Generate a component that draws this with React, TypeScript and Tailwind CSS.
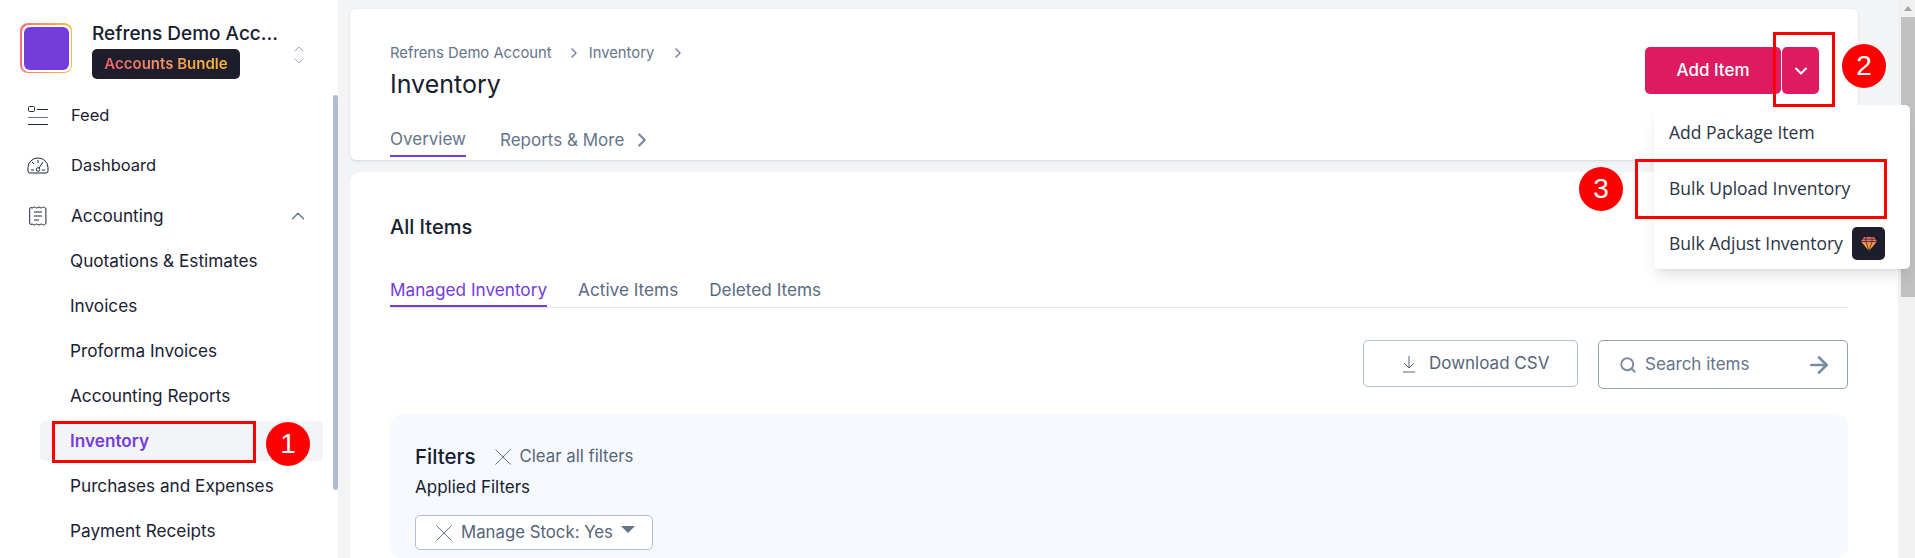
import { ChevronDown, ChevronRight, ChevronUp, Search, ArrowRight } from "lucide-react";

const subItems = [
  "Quotations & Estimates",
  "Invoices",
  "Proforma Invoices",
  "Accounting Reports",
  "Inventory",
  "Purchases and Expenses",
  "Payment Receipts",
];

const FeedIcon = () => (
  <svg width="20" height="19" viewBox="0 0 20 19" fill="none" stroke="#1f2937" strokeWidth="1">
    <rect x="0.5" y="0.5" width="6" height="5" rx="1" />
    <path d="M9 3.5h11M0 18.5h20" />
    <path d="M0 11.5h20" stroke="#64748b" />
  </svg>
);

const DashIcon = () => (
  <svg width="22" height="17" viewBox="0 0 22 17" fill="none" stroke="#1f2937" strokeWidth="1">
    <path d="M3 16h16a2 2 0 0 0 2-2v-3.5a10 9.5 0 0 0-20 0V14a2 2 0 0 0 2 2z" />
    <path d="M11 3v3M5 5l2 2M16 5l-4 6M4 13h3M15 13h3" />
    <circle cx="11" cy="12.5" r="1.8" />
  </svg>
);

const BillIcon = () => (
  <svg width="18" height="20" viewBox="0 0 18 20" fill="none" stroke="#1f2937" strokeWidth="1">
    <path d="M2 1.5q1.1 1 2.2 0t2.2 0 2.4 0 2.4 0 2.2 0 2.2 0q1.3.2 1.3 1.5v14q0 1.3-1.3 1.5-1.1 1-2.2 0t-2.2 0-2.4 0-2.4 0-2.2 0-2.2 0Q.7 18.3.7 17V3q0-1.3 1.3-1.5z" />
    <path d="M5 6h8M5 10h8M5 14h5" />
  </svg>
);

const CrossIcon = () => (
  <svg width="16" height="16" viewBox="0 0 16 16" fill="none" stroke="#64748b" strokeWidth="1" className="shrink-0">
    <path d="M.5.5l15 15M15.5.5l-15 15" />
  </svg>
);

const Marker = ({ n, className }: { n: number; className: string }) => (
  <div className={`absolute flex h-11 w-11 items-center justify-center rounded-full bg-[#ff0000] font-['Liberation_Sans',sans-serif] text-[28px] text-white ${className}`}>
    {n}
  </div>
);

const Sidebar = () => (
  <aside className="relative z-10 h-[558px] w-[338px] shrink-0 overflow-hidden bg-white text-[17.2px] text-[#1a2233]">
    <div className="flex h-[90px] items-start pl-5 pt-[23px]">
      <div className="h-[50px] w-[52px] rounded-[8px] bg-gradient-to-r from-[#ff6b7a] to-[#fbbf24] p-[1.5px]">
        <div className="h-full w-full rounded-[7px] bg-white p-[2px]">
          <div className="h-full w-full rounded-[6px] bg-[#733cdb]" />
        </div>
      </div>
      <div className="ml-5 w-[190px]">
        <div className="whitespace-nowrap text-[19px] leading-[22px] font-medium text-[#17202f]">Refrens Demo Acc...</div>
        <div className="mt-[4px] flex h-[30px] w-[148px] items-center justify-center rounded-[5px] bg-[#1d1d2b]">
          <span className="bg-gradient-to-r from-[#f0616d] to-[#fbbf24] bg-clip-text text-[15px] font-semibold text-transparent">Accounts Bundle</span>
        </div>
      </div>
      <div className="ml-[9px] mt-[18px] flex flex-col text-[#8291a8]">
        <ChevronUp size={16} strokeWidth={1.2} className="-mb-[4px]" />
        <ChevronDown size={16} strokeWidth={1.2} />
      </div>
    </div>
    <div className="flex h-[50px] items-center pl-[28px] text-[16.5px]">
      <FeedIcon />
      <span className="ml-[23px]">Feed</span>
    </div>
    <div className="flex h-[50px] items-center pl-[27px] text-[16.5px]">
      <DashIcon />
      <span className="ml-[22px]">Dashboard</span>
    </div>
    <div className="flex h-[50px] items-center pl-[29px] pr-[29px] pt-[1px]">
      <BillIcon />
      <span className="ml-[24px]">Accounting</span>
      <ChevronUp size={22} strokeWidth={1.5} className="ml-auto text-[#64748b]" />
    </div>
    <div className="-mt-[2px] flex flex-col pl-[40px]">
      {subItems.map((s) => (
        <div key={s} className="flex h-[45px] w-[283px] items-center">
          <div className={`flex h-[40px] w-full items-center pl-[30px] ${s === "Inventory" ? "rounded-[5px] bg-[#f3f4f6] font-semibold text-[#733cdb]" : ""}`}>{s}</div>
        </div>
      ))}
    </div>
    <div className="absolute left-[333px] top-[95px] h-[395px] w-[5px] rounded-full bg-[#b0bdd4]" />
    <div className="absolute left-[52px] top-[421px] h-[42px] w-[204px] border-[3px] border-[#ff0000]" />
    <Marker n={1} className="left-[266px] top-[422px]" />
  </aside>
);

const TopCard = () => (
  <div className="mr-[40px] flex h-[151px] justify-between rounded-[6px] bg-white pl-[40px] pr-[39px] shadow-sm">
    <div>
      <div className="mt-[33px] flex items-center text-[14.8px] leading-[22px] text-[#64748b]">
        Refrens Demo Account
        <ChevronRight size={16} strokeWidth={2.5} className="ml-[14px] mr-[7px] text-[#7a8aa3]" />
        Inventory
        <ChevronRight size={16} strokeWidth={2.5} className="ml-[16px] text-[#7a8aa3]" />
      </div>
      <div className="mt-[4px] text-[25px] leading-[32px] text-[#17202f]">Inventory</div>
      <div className="mt-[27px] flex items-start text-[17px] leading-[24px] text-[#64748b]">
        <div className="h-[30px] border-b-[2px] border-[#733cdb]">Overview</div>
        <div className="ml-[34px] mt-[1px] flex items-center">
          Reports &amp; More
          <ChevronRight size={22} strokeWidth={2.5} className="ml-[7px] text-[#7a8aa3]" />
        </div>
      </div>
    </div>
    <div className="mt-[38px] flex h-[47px] gap-[1px]">
      <button className="h-[47px] w-[136px] rounded-[5px] bg-[#de1b60] text-[17px] font-medium text-white">Add Item</button>
      <button className="flex h-[47px] w-[37px] items-center justify-center rounded-[5px] bg-[#de1b60] text-white">
        <ChevronDown size={20} strokeWidth={2.5} />
      </button>
    </div>
  </div>
);

const ListCard = () => (
  <div className="mt-[12px] h-[386px] rounded-tl-[10px] bg-white pl-[40px] pr-[50px]">
    <div className="pt-[43px] text-[20px] leading-[24px] font-medium text-[#17202f]">All Items</div>
    <div className="mt-[38px] flex h-[31px] items-start gap-[31px] border-b border-[#e2e5ea] pt-[1px] text-[17.2px] leading-[24px] text-[#5a6a82]">
      <div className="h-[29px] border-b-[2px] border-[#733cdb] text-[#733cdb]">Managed Inventory</div>
      <div>Active Items</div>
      <div>Deleted Items</div>
    </div>
    <div className="mt-[32px] flex items-start justify-end gap-[20px]">
      <button className="flex h-[47px] w-[215px] items-center gap-[13px] rounded-[5px] border border-[#b0bdd4] pl-[38px] text-[17px] text-[#566479]">
        <svg width="14" height="18" viewBox="0 0 14 18" fill="none" stroke="#566479" strokeWidth="1">
          <path d="M7 1v12M2 8l5 5 5-5M1 17h12" />
        </svg>
        Download CSV
      </button>
      <div className="flex h-[49px] w-[250px] items-center rounded-[5px] border border-[#94a0b3] pl-[20px] pr-[15px] text-[17px] text-[#64748b]">
        <Search size={18} strokeWidth={2.5} className="text-[#7a8aa3]" />
        <span className="ml-[8px]">Search items</span>
        <ArrowRight size={26} strokeWidth={2.5} className="ml-auto text-[#7a8aa3]" />
      </div>
    </div>
    <div className="mt-[25px] h-[144px] rounded-[12px] bg-[#f6faff] pl-[25px] pt-[30px]">
      <div className="flex items-center">
        <span className="text-[20.5px] leading-[24px] font-medium text-[#17202f]">Filters</span>
        <span className="ml-[19px]"><CrossIcon /></span>
        <span className="ml-[9px] text-[16.8px] text-[#566479]">Clear all filters</span>
      </div>
      <div className="mt-[6px] text-[17px] leading-[24px] text-[#17202f]">Applied Filters</div>
      <div className="mt-[16px] flex h-[35px] w-[238px] items-center rounded-[5px] border border-[#b0bdd4] bg-white pl-[20px] text-[16.8px] text-[#566479]">
        <CrossIcon />
        <span className="ml-[9px]">Manage Stock: Yes</span>
        <span className="ml-[8px] mb-[6px] h-0 w-0 border-x-[7px] border-t-[7px] border-x-transparent border-t-[#64748b]" />
      </div>
    </div>
  </div>
);

const Dropdown = () => (
  <div className="absolute left-[1654px] top-[105px] z-20 h-[164px] w-[256px] rounded-[5px] bg-white font-['Open_Sans',sans-serif] text-[17.5px] text-[#2b3444] shadow-lg">
    <div className="absolute left-[139px] top-[-7px] h-0 w-0 border-x-[7px] border-b-[7px] border-x-transparent border-b-white" />
    <div className="flex h-[54px] items-center pl-[15px]">Add Package Item</div>
    <div className="flex h-[56px] items-center pl-[15px] pt-[2px]">Bulk Upload Inventory</div>
    <div className="flex h-[54px] items-center pl-[15px] pt-[2px]">
      Bulk Adjust Inventory
      <div className="absolute left-[198px] top-[122px] flex h-[33px] w-[33px] items-center justify-center rounded-[5px] bg-[#1d1d2b]">
        <svg width="18" height="16" viewBox="0 0 18 16">
          <defs>
            <linearGradient id="gem" x1="0" y1="0" x2="0" y2="1">
              <stop offset="0" stopColor="#f0616d" />
              <stop offset="1" stopColor="#fbbf24" />
            </linearGradient>
          </defs>
          <path d="M4 1h10l3 4.5L9 15 1 5.5z" fill="url(#gem)" />
          <path d="M1 5.5h16M2.5 3.2h13M6 1v4.5L9 15l3-9.5V1" stroke="#1d1d2b" strokeWidth="0.7" fill="none" />
        </svg>
      </div>
    </div>
  </div>
);

const PageScrollbar = () => (
  <div className="flex h-[558px] w-[17px] shrink-0 flex-col bg-[#f1f1f1]">
    <div className="flex h-[17px] items-center justify-center pl-[3px]">
      <span className="h-0 w-0 border-x-[4px] border-b-[5px] border-x-transparent border-b-[#a3a3a3]" />
    </div>
    <div className="ml-[3px] h-[280px] bg-[#c1c1c1]" />
  </div>
);

export default function App() {
  return (
    <div className="relative flex h-[558px] w-[1915px] overflow-hidden bg-[#f3f4f6] font-['Inter',sans-serif]">
      <Sidebar />
      <main className="min-w-0 flex-1 pl-[12px] pt-[9px]">
        <TopCard />
        <ListCard />
      </main>
      <PageScrollbar />
      <Dropdown />
      <div className="absolute left-[1773px] top-[32px] z-30 h-[75px] w-[62px] border-[3px] border-[#ff0000]" />
      <div className="absolute left-[1635px] top-[159px] z-30 h-[60px] w-[252px] border-[3px] border-[#ff0000]" />
      <Marker n={2} className="left-[1842px] top-[44px] z-30" />
      <Marker n={3} className="left-[1579px] top-[167px] z-30" />
    </div>
  );
}
